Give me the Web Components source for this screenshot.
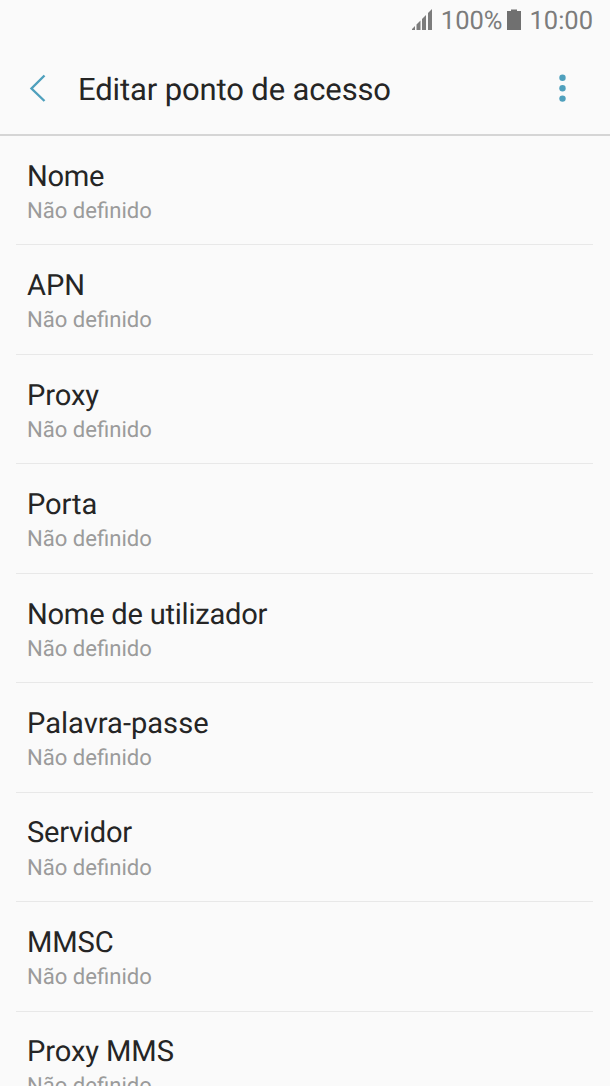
<!DOCTYPE html>
<html lang="pt">
<head>
<meta charset="utf-8">
<title>Editar ponto de acesso</title>
<style>
html,body{margin:0;height:100%;overflow:hidden;background:#fafafa}
body{font-family:Roboto,sans-serif;color:#252525;text-rendering:geometricPrecision}
</style>
</head>
<body>
<apn-screen></apn-screen>
<script>
const define = (name, markup) => customElements.define(name, class extends HTMLElement {
  constructor() {
    super();
    const t = document.createElement('template');
    t.innerHTML = markup;
    this.attachShadow({mode: 'open'}).append(t.content.cloneNode(true));
  }
});
define('status-bar', `<style>
:host{display:flex;height:40px;box-sizing:border-box;padding-right:17px;justify-content:flex-end;align-items:center;color:#7c7c7c;font-size:25.5px;line-height:40px}
svg{display:block;flex:none}
span{padding-top:1px}
.s{margin-right:8px}.b{margin:0 8px 0 5px}
</style>
<svg class="s" width="21" height="22" viewBox="0 0 21 22" fill="#7c7c7c"><path d="M0 21v-1l3-3v4zM4.500 21v-5.500l4-4v9.500zM10 21v-11l4-4v15zM16 21V4l4-4v21z"/></svg>
<span>100%</span>
<svg class="b" width="14" height="22" viewBox="0 0 14 22" fill="#707070"><path d="M0 2h4V.5h6V2h4v19H0z"/></svg>
<span>10:00</span>`);
define('app-bar', `<style>
:host{display:flex;height:96px;box-sizing:border-box;border-bottom:2px solid #d5d5d5;padding:2px 43px 0 29px;align-items:center}
h1{margin:0 auto 0 32px;font-size:31px;letter-spacing:-.13px;font-weight:400;line-height:40px;padding-top:3px}
svg{display:block;flex:none}
</style>
<svg width="17" height="28" viewBox="0 0 17 28" fill="none" stroke="#4fa0bd" stroke-width="2.4"><path d="M15.500 1.500L2.500 14.500l13 12.500"/></svg>
<h1><slot></slot></h1>
<svg width="10" height="28" viewBox="0 0 10 28" fill="#4fa0bd"><circle cx="5.500" cy="3.7" r="3.2"/><circle cx="5.500" cy="14.2" r="3.2"/><circle cx="5.500" cy="24.6" r="3.2"/></svg>`);
define('setting-row', `<style>
:host{display:block;flex:none;height:109.45px;box-sizing:border-box;margin:0 17px 0 16px;padding:22.8px 0 0 11px;border-bottom:1px solid #e8e8e8}
.t{font-size:29.1px;line-height:36px;letter-spacing:var(--tracking,0)}
.v{font-size:22.1px;line-height:28px;color:#9b9b9b;margin-top:2.2px}
</style><div class="t"><slot></slot></div><div class="v"><slot name="value"></slot></div>`);
const rows = [['Nome', -.25], ['APN', -.1], ['Proxy', -.1], ['Porta', -.1], ['Nome de utilizador', -.24], ['Palavra-passe', 0], ['Servidor', -.25], ['MMSC', -.1], ['Proxy MMS', -.1]];
define('apn-screen', `<style>
:host{display:flex;flex-direction:column;height:1086px;overflow:hidden}
main{flex:1;min-height:0;overflow:hidden;display:flex;flex-direction:column}
status-bar,app-bar{flex:none}
</style><status-bar></status-bar><app-bar>Editar ponto de acesso</app-bar><main>` +
rows.map(([n, s]) => `<setting-row style="--tracking:${s}px">${n}<span slot="value">Não definido</span></setting-row>`).join('') + `</main>`);
</script>
</body>
</html>
